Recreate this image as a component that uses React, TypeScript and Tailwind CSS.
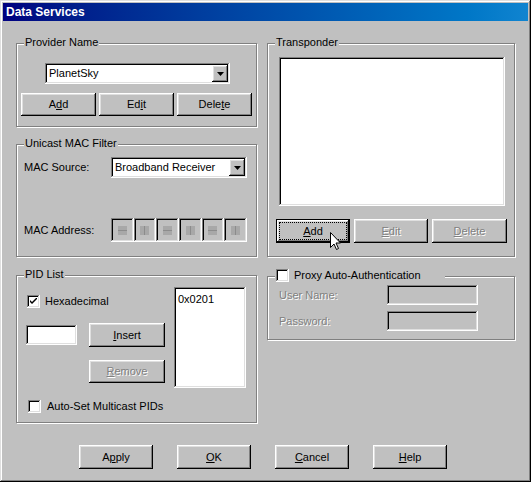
import React from 'react';

const raised =
  'shadow-[inset_-1px_-1px_#000,inset_1px_1px_#fff,inset_-2px_-2px_#808080,inset_2px_2px_#dfdfdf]';
const sunken =
  'shadow-[inset_-1px_-1px_#fff,inset_1px_1px_#808080,inset_-2px_-2px_#dfdfdf,inset_2px_2px_#000]';
const grayText = 'text-[#808080] [text-shadow:1px_1px_0_#fff]';

interface BtnProps {
  children: React.ReactNode;
  className?: string;
  disabled?: boolean;
  isDefault?: boolean;
}

const Btn: React.FC<BtnProps> = ({ children, className = '', disabled = false, isDefault = false }) => (
  <div
    className={`relative flex items-center justify-center bg-[#c0c0c0] ${
      isDefault ? 'border border-black' : ''
    } ${raised} ${disabled ? grayText : 'text-black'} ${className}`}
  >
    {isDefault && <div className="absolute inset-[2px] border border-dotted border-black" />}
    <span className="leading-none">{children}</span>
  </div>
);

const Group: React.FC<{ label?: React.ReactNode; className?: string; children?: React.ReactNode }> = ({
  label,
  className = '',
  children,
}) => (
  <div className={`relative border border-[#808080] shadow-[1px_1px_0_#fff,inset_1px_1px_0_#fff] ${className}`}>
    {label && (
      <div className="absolute left-[7px] top-[-9px] bg-[#c0c0c0] px-[1px] leading-[14px]">{label}</div>
    )}
    {children}
  </div>
);

const Check: React.FC<{ checked?: boolean }> = ({ checked = false }) => (
  <div className={`w-[13px] h-[13px] bg-white flex items-center justify-center ${sunken}`}>
    {checked && (
      <svg width="7" height="7" viewBox="0 0 7 7">
        <path d="M0 2 L0 4 L2 6 L7 1 L7 -1 L2 4 Z" fill="#000" />
      </svg>
    )}
  </div>
);

const Combo: React.FC<{ text: string; className?: string }> = ({ text, className = '' }) => (
  <div className={`flex items-center bg-white pl-[4px] pr-[2px] ${sunken} ${className}`}>
    <span className="flex-1 leading-none">{text}</span>
    <div className={`w-[16px] h-[17px] bg-[#c0c0c0] flex items-center justify-center ${raised}`}>
      <svg width="7" height="4" viewBox="0 0 7 4">
        <path d="M0 0 H7 L3.5 4 Z" fill="#000" />
      </svg>
    </div>
  </div>
);

const MacBox: React.FC<{ variant: number }> = ({ variant }) => (
  <div className={`h-[24px] flex items-center justify-center bg-[#c0c0c0] ${sunken}`}>
    <div className="w-[9px] h-[9px] bg-[#a8a8a8] flex flex-col justify-center">
      {variant % 2 === 0 ? (
        <div className="h-[1px] bg-[#8c8c8c]" />
      ) : (
        <div className="mx-auto w-[1px] h-full bg-[#8c8c8c]" />
      )}
    </div>
  </div>
);

export default function App() {
  return (
    <div className="w-[531px] h-[482px] font-['Liberation_Sans',Arial,sans-serif] text-[11px] text-black">
      <div
        className={`relative w-[531px] h-[482px] bg-[#c0c0c0] p-[3px] shadow-[inset_-1px_-1px_#000,inset_1px_1px_#dfdfdf,inset_-2px_-2px_#808080,inset_2px_2px_#fff]`}
      >
        {/* title bar */}
        <div className="h-[18px] bg-linear-to-r from-[#000080] to-[#1084d0] flex items-center pl-[3px]">
          <span className="text-white font-bold text-[12px] leading-none">Data Services</span>
        </div>

        <div className="pl-[13px] pt-[22px]">
          <div className="flex items-start gap-[10px]">
            {/* left column */}
            <div className="flex flex-col w-[241px]">
              <Group label="Provider Name" className="h-[84px] pt-[19px] pl-[4px]">
                <Combo text="PlanetSky" className="ml-[24px] w-[185px] h-[21px]" />
                <div className="mt-[9px] flex gap-[3px]">
                  <Btn className="w-[75px] h-[23px]">
                    A<u>d</u>d
                  </Btn>
                  <Btn className="w-[75px] h-[23px]">
                    Ed<u>i</u>t
                  </Btn>
                  <Btn className="w-[75px] h-[23px]">
                    Dele<u>t</u>e
                  </Btn>
                </div>
              </Group>

              <Group label="Unicast MAC Filter" className="mt-[17px] h-[113px] pt-[12px] pl-[7px]">
                <div className="flex items-center">
                  <span className="w-[87px]">MAC Source:</span>
                  <Combo text="Broadband Receiver" className="w-[136px] h-[21px]" />
                </div>
                <div className="mt-[40px] flex items-center">
                  <span className="w-[87px]">MAC Address:</span>
                  <div className="grid grid-cols-6 w-[136px]">
                    {[0, 1, 2, 3, 4, 5].map((v) => (
                      <MacBox key={v} variant={v} />
                    ))}
                  </div>
                </div>
              </Group>

              <Group label="PID List" className="mt-[18px] h-[148px]">
                <div className="flex pl-[9px] pt-[11px]">
                  <div className="w-[139px] pt-[8px] flex flex-col">
                    <div className="flex items-center ml-[1px]">
                      <Check checked />
                      <span className="ml-[5px] leading-none">Hexadecimal</span>
                    </div>
                    <div className="mt-[15px] flex items-center">
                      <div className={`w-[51px] h-[20px] bg-white ${sunken}`} />
                      <Btn className="ml-auto w-[76px] h-[24px]">
                        <u>I</u>nsert
                      </Btn>
                    </div>
                    <Btn disabled className="mt-[13px] self-end w-[76px] h-[23px]">
                      <u>R</u>emove
                    </Btn>
                  </div>
                  <div className={`ml-[9px] w-[72px] h-[101px] bg-white pl-[4px] pt-[4px] ${sunken}`}>
                    <span className="leading-none">0x0201</span>
                  </div>
                </div>
                <div className="mt-[12px] pl-[11px] flex items-center">
                  <Check />
                  <span className="ml-[6px] leading-none">Auto-Set Multicast PIDs</span>
                </div>
              </Group>
            </div>

            {/* right column */}
            <div className="flex flex-col w-[248px]">
              <Group label="Transponder" className="h-[214px] pt-[13px] pl-[8px]">
                <div className={`ml-[3px] w-[226px] h-[149px] bg-white ${sunken}`} />
                <div className="mt-[13px] flex gap-[4px]">
                  <Btn isDefault className="w-[74px] h-[24px]">
                    <u>A</u>dd
                  </Btn>
                  <Btn disabled className="w-[74px] h-[24px]">
                    <u>E</u>dit
                  </Btn>
                  <Btn disabled className="w-[75px] h-[24px]">
                    <u>D</u>elete
                  </Btn>
                </div>
              </Group>

              <Group className="mt-[19px] h-[64px] pt-[8px] pl-[11px]">
                <div className="absolute left-[7px] top-[-9px] w-[170px] bg-[#c0c0c0] pl-[1px] h-[14px] flex items-center">
                  <Check />
                  <span className="ml-[5px] leading-none">Proxy Auto-Authentication</span>
                </div>
                <div className="flex items-center">
                  <span className={`w-[108px] ${grayText}`}>User Name:</span>
                  <div className={`w-[91px] h-[20px] bg-[#c0c0c0] ${sunken}`} />
                </div>
                <div className="mt-[6px] flex items-center">
                  <span className={`w-[108px] ${grayText}`}>Password:</span>
                  <div className={`w-[91px] h-[20px] bg-[#c0c0c0] ${sunken}`} />
                </div>
              </Group>
            </div>
          </div>

          {/* bottom buttons */}
          <div className="mt-[22px] pl-[63px] flex gap-[24px]">
            <Btn className="w-[74px] h-[24px]">
              A<u>p</u>ply
            </Btn>
            <Btn className="w-[74px] h-[24px]">
              <u>O</u>K
            </Btn>
            <Btn className="w-[74px] h-[24px]">
              <u>C</u>ancel
            </Btn>
            <Btn className="w-[74px] h-[24px]">
              <u>H</u>elp
            </Btn>
          </div>
        </div>

        {/* mouse pointer */}
        <svg className="absolute left-[330px] top-[232px]" width="12" height="19" viewBox="0 0 12 19">
          <path
            d="M0.5 0.5 L0.5 15.5 L4 12 L6.5 17.5 L8.5 16.5 L6 11 L10.5 11 Z"
            fill="#fff"
            stroke="#000"
            strokeWidth="1"
          />
        </svg>
      </div>
    </div>
  );
}
